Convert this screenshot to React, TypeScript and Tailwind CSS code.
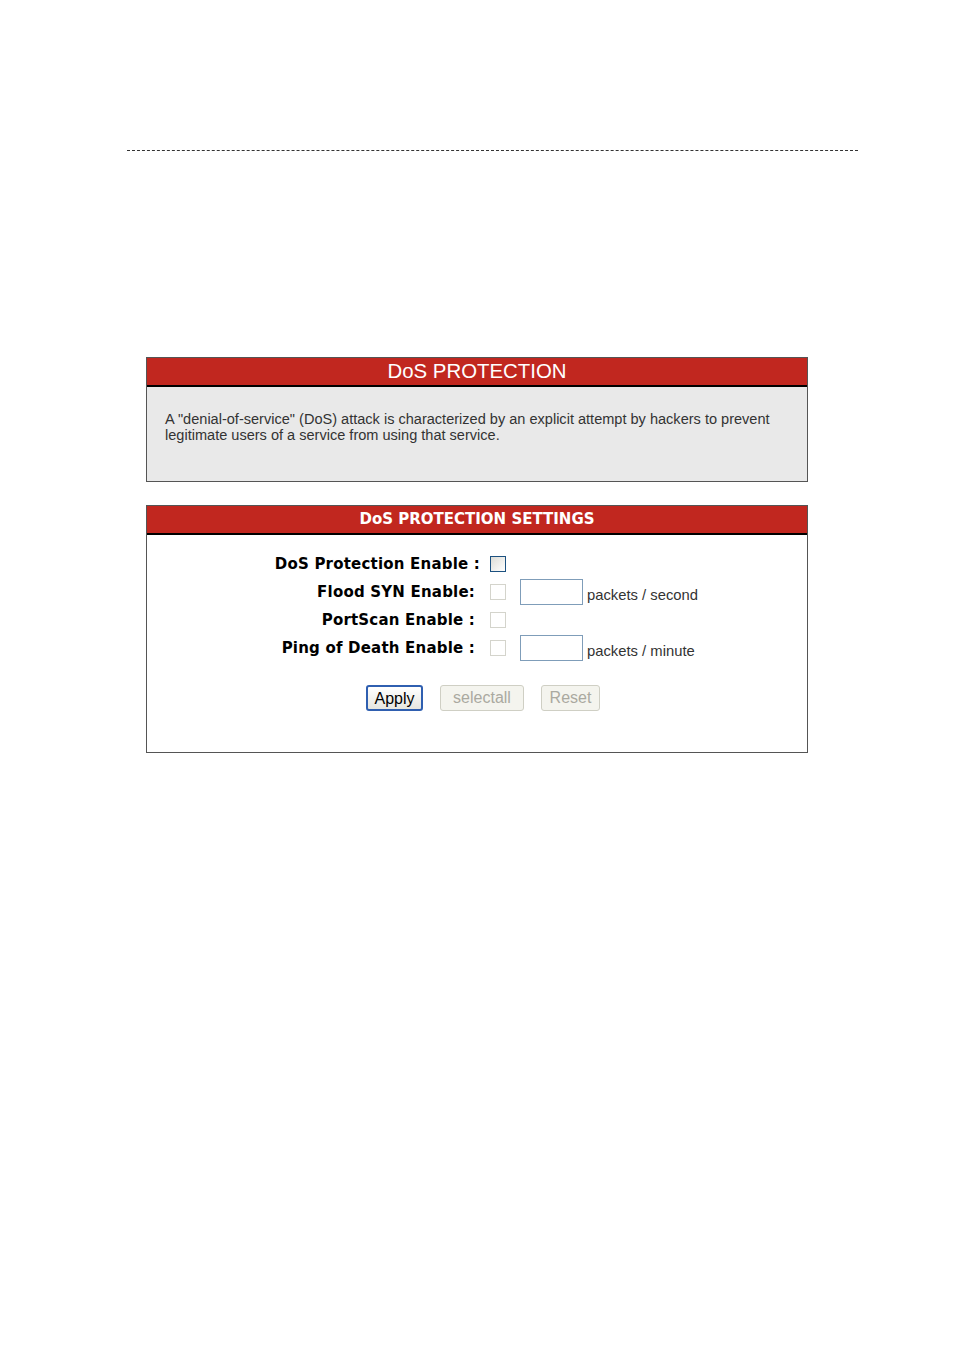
import React from 'react';

const labelFont = { fontFamily: '"DejaVu Sans", Verdana, sans-serif' };

function Row({ label, active = false, unit }: { label: string; active?: boolean; unit?: string }) {
  return (
    <div className="flex items-center h-[28px]">
      <div
        className={`w-[335px] text-right text-[15px] font-bold text-black tracking-[0.2px] ${active ? 'pr-[2px]' : 'pr-[7px]'}`}
        style={labelFont}
      >
        {label}
      </div>
      <div className="w-[8px]" />
      <span
        className={`block w-[16px] h-[16px] border ${
          active ? 'border-[#1c5180] bg-gradient-to-br from-[#dcdcd6] to-white' : 'border-[#d4d4cc] bg-white'
        }`}
      />
      {unit && (
        <div className="flex items-center ml-[14px]">
          <span className="block w-[63px] h-[26px] border border-[#7f9db9] bg-white" />
          <span className="ml-[4px] mt-[6px] text-[14.8px] text-[#333] leading-[18px]">{unit}</span>
        </div>
      )}
    </div>
  );
}

export default function App() {
  return (
    <div className="w-[954px] h-[1350px] bg-white" style={{ fontFamily: '"Liberation Sans", Arial, sans-serif' }}>
      <div className="pt-[150px] px-[127px] w-[954px]">
        <div className="border-t border-dashed border-[#333] w-[731px]" />
      </div>

      <div className="ml-[146px] mt-[206px] w-[662px] border border-[#555] bg-[#e9e9e9]">
        <div className="h-[29px] bg-[#c1271f] border-b-2 border-black flex items-center justify-center text-white text-[20.4px]">
          DoS PROTECTION
        </div>
        <div className="px-[18px] pt-[24px] pb-[38px] text-[14.55px] leading-[16px] text-[#333]">
          A "denial-of-service" (DoS) attack is characterized by an explicit attempt by hackers to prevent legitimate users of a service from using that service.
        </div>
      </div>

      <div className="ml-[146px] mt-[23px] w-[662px] border border-[#555] bg-white">
        <div className="h-[29px] bg-[#c1271f] border-b-2 border-black flex items-center justify-center text-white text-[15px] font-bold" style={labelFont}>
          DoS PROTECTION SETTINGS
        </div>
        <div className="pt-[15px]">
          <Row label="DoS Protection Enable :" active />
          <Row label="Flood SYN Enable:" unit="packets / second" />
          <Row label="PortScan Enable :" />
          <Row label="Ping of Death Enable :" unit="packets / minute" />
        </div>
        <div className="flex justify-center gap-[17px] pt-[23px] pb-[41px] pl-[12px]">
          <button className="w-[57px] h-[26px] rounded-[3px] border-2 border-[#2f5fb0] bg-gradient-to-b from-white to-[#e6e6e0] text-[16px] text-black">
            Apply
          </button>
          <button className="w-[84px] h-[26px] rounded-[3px] border border-[#cfcfc4] bg-[#f4f4ee] text-[16px] text-[#aaa9a0]">
            selectall
          </button>
          <button className="w-[59px] h-[26px] rounded-[3px] border border-[#cfcfc4] bg-[#f4f4ee] text-[16px] text-[#aaa9a0]">
            Reset
          </button>
        </div>
      </div>
    </div>
  );
}
